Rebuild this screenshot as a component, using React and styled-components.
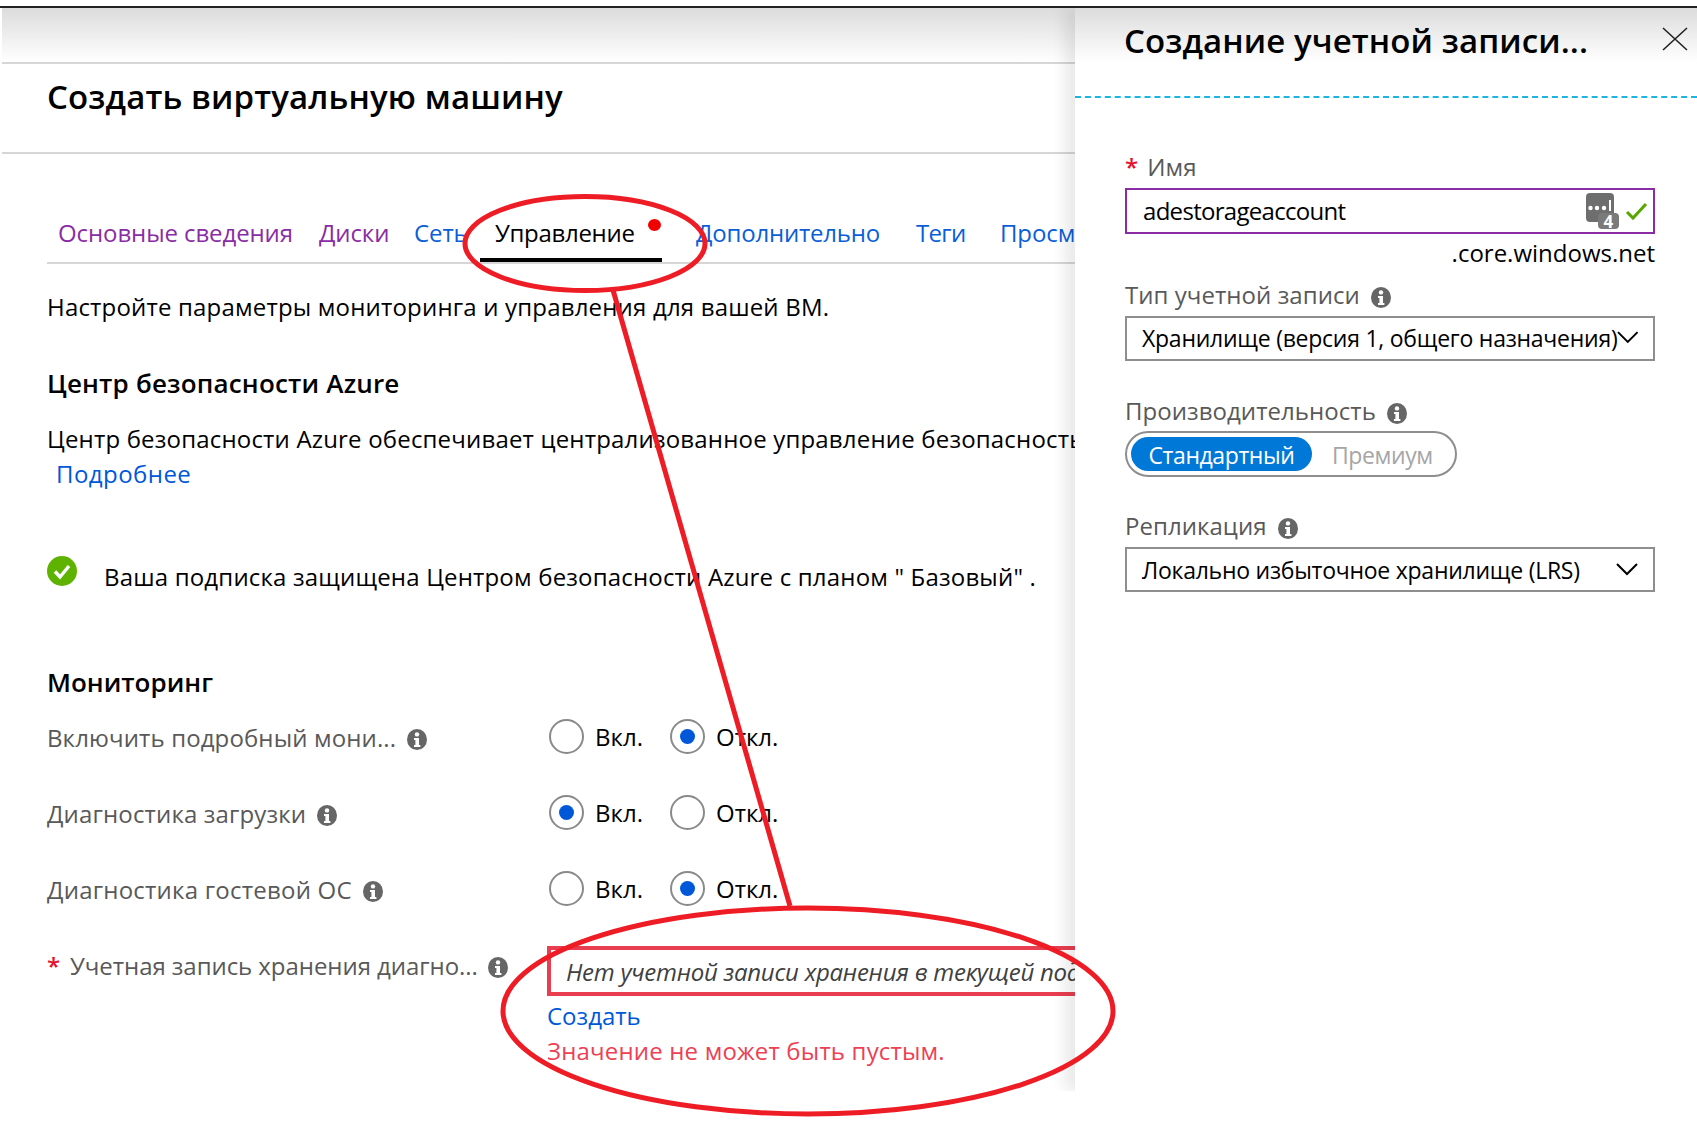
import styled, { createGlobalStyle } from "styled-components";

const GlobalStyle = createGlobalStyle`
  html, body { margin: 0; padding: 0; background: #fff; }
  body { font-family: "Open Sans", "Noto Sans", sans-serif; color: #000; }
`;

const Page = styled.div`
  position: relative;
  width: 1697px;
  height: 1145px;
  padding-top: 6px;
  box-sizing: border-box;
  overflow: hidden;
`;

const Shell = styled.div`
  display: flex;
  height: 1083px;
  border-top: 2px solid #222;
  overflow: hidden;
`;

const Main = styled.main`
  width: 1073px;
  margin-left: 2px;
  flex: none;
  overflow: hidden;
`;

const TopBand = styled.div`
  height: 54px;
  background: linear-gradient(#dcdcdc, #fff);
  border-bottom: 2px solid #d6d6d6;
`;

const Header = styled.header`
  height: 90px;
  padding: 12px 0 0 45px;
  box-sizing: border-box;
  border-bottom: 2px solid #d6d6d6;
`;

const Title = styled.h1`
  margin: 0;
  font-size: 33px;
  font-weight: 600;
  letter-spacing: 0.12px;
  line-height: 42px;
  white-space: nowrap;
`;

const Body = styled.div`
  padding-left: 45px;
`;

const Tabs = styled.nav`
  display: flex;
  padding-top: 63px;
  border-bottom: 2px solid #d6d6d6;
  white-space: nowrap;
`;

const Tab = styled.a`
  position: relative;
  flex: none;
  width: ${(p) => p.$w}px;
  height: 45px;
  padding-left: ${(p) => p.$pl}px;
  box-sizing: border-box;
  font-size: 24px;
  letter-spacing: ${(p) => p.$ls}px;
  line-height: 32px;
  color: ${(p) => (p.$active ? "#000" : p.$visited ? "#8a2da5" : "#0a5fd8")};
  border-bottom: 4px solid ${(p) => (p.$active ? "#000" : "transparent")};
`;

const TabDot = styled.span`
  position: absolute;
  top: 2px;
  right: 1px;
  width: 13px;
  height: 12px;
  border-radius: 50%;
  background: #f00000;
`;

const Text = styled.p`
  margin: ${(p) => p.$mt}px 0 0;
  font-size: 24px;
  letter-spacing: 0.18px;
  line-height: ${(p) => p.$lh || 34}px;
  white-space: nowrap;
`;

const Link = styled.a`
  display: block;
  margin-top: ${(p) => p.$mt || 0}px;
  padding-left: ${(p) => p.$pl || 0}px;
  font-size: 24px;
  letter-spacing: ${(p) => p.$ls || 0}px;
  line-height: 34px;
  color: #0058d8;
`;

const Heading = styled.h2`
  margin: ${(p) => p.$mt}px 0 0;
  font-size: 26px;
  font-weight: 600;
  letter-spacing: ${(p) => p.$ls}px;
  line-height: 36px;
  white-space: nowrap;
`;

const StatusRow = styled.div`
  display: flex;
  gap: 27px;
  margin-top: 69px;
  font-size: 24px;
  letter-spacing: 0.18px;
  line-height: 34px;
  white-space: nowrap;
`;

const StatusIcon = styled.svg`
  flex: none;
  width: 30px;
  height: 30px;
  margin-top: -4px;
`;

const RowList = styled.div`
  margin-top: -1px;
`;

const Row = styled.div`
  display: grid;
  grid-template-columns: 502px 1fr;
  height: 76px;
`;

const RowLabel = styled.div`
  display: flex;
  align-items: center;
  gap: ${(p) => p.$gap || 11}px;
  height: 76px;
  font-size: 24px;
  letter-spacing: ${(p) => p.$ls}px;
  color: #595959;
  white-space: nowrap;
`;

const Star = styled.span`
  color: #e8112d;
  font-size: 24px;
  font-weight: 600;
`;

const Radios = styled.div`
  display: flex;
  align-items: center;
  height: 76px;
  margin-top: -1px;
`;

const Option = styled.label`
  display: flex;
  align-items: center;
  gap: 11px;
  width: 121px;
  font-size: 24px;
`;

const Radio = styled.span`
  display: flex;
  align-items: center;
  justify-content: center;
  width: 35px;
  height: 35px;
  box-sizing: border-box;
  border: 2px solid #8a8a8a;
  border-radius: 50%;

  &::after {
    content: "";
    display: ${(p) => (p.$on ? "block" : "none")};
    width: 15px;
    height: 15px;
    border-radius: 50%;
    background: #0058d8;
  }
`;

const FieldColumn = styled.div`
  margin-left: -2px;
  padding-top: 19px;
  white-space: nowrap;
`;

const ErrorInput = styled.div`
  height: 50px;
  margin-right: -40px;
  padding-left: 15px;
  box-sizing: border-box;
  border: 4px solid #e83e50;
  font-size: 24px;
  font-style: italic;
  letter-spacing: -0.25px;
  line-height: 43px;
  color: #404040;
  overflow: hidden;
`;

const ErrorText = styled.div`
  margin-top: 1px;
  font-size: 24px;
  letter-spacing: 0.17px;
  line-height: 34px;
  color: #ee3f54;
`;

const Panel = styled.aside`
  position: relative;
  flex: none;
  width: 622px;
  background: linear-gradient(#dcdcdc, #fff 54px);
  box-shadow: -10px 0 14px rgba(0, 0, 0, 0.09);
`;

const PanelHeader = styled.div`
  display: flex;
  justify-content: space-between;
  align-items: flex-start;
  height: 90px;
  padding: 11px 9px 0 49px;
  box-sizing: border-box;
  border-bottom: 2px dashed #1cb5e0;
`;

const PanelTitle = styled.h2`
  margin: 0;
  font-size: 33px;
  font-weight: 600;
  letter-spacing: 0.1px;
  line-height: 44px;
  white-space: nowrap;
`;

const CloseIcon = styled.svg`
  width: 26px;
  height: 24px;
  margin-top: 8px;
`;

const Form = styled.div`
  padding: 53px 42px 0 50px;
`;

const FieldLabel = styled.div`
  display: flex;
  align-items: center;
  gap: ${(p) => p.$gap || 11}px;
  margin-top: ${(p) => p.$mt || 0}px;
  font-size: 24px;
  letter-spacing: 0.05px;
  line-height: 32px;
  color: #595959;
  white-space: nowrap;
`;

const NameInput = styled.div`
  display: flex;
  align-items: center;
  height: 46px;
  margin-top: 5px;
  padding: 0 5px 0 16px;
  box-sizing: border-box;
  border: 2px solid #8a2da5;
  font-size: 24px;
  letter-spacing: -0.7px;
`;

const NameValue = styled.span`
  flex: 1;
  margin-top: -2px;
`;

const Suffix = styled.div`
  margin-top: 3px;
  font-size: 24px;
  line-height: 32px;
  text-align: right;
`;

const Select = styled.div`
  display: flex;
  align-items: center;
  justify-content: space-between;
  height: 45px;
  margin-top: ${(p) => p.$mt}px;
  padding: 0 ${(p) => p.$pr}px ${(p) => p.$pb}px 15px;
  box-sizing: border-box;
  border: 2px solid #8e8e8e;
  font-size: 23px;
  letter-spacing: -0.25px;
  white-space: nowrap;
`;

const Toggle = styled.div`
  display: flex;
  align-items: center;
  width: 332px;
  height: 46px;
  margin-top: 4px;
  padding: 0 4px;
  box-sizing: border-box;
  border: 2px solid #8e8e8e;
  border-radius: 23px;
  font-size: 23px;
  letter-spacing: -0.4px;
`;

const ToggleOn = styled.span`
  width: 181px;
  height: 34px;
  line-height: 36px;
  text-align: center;
  border-radius: 17px;
  background: #0078d7;
  color: #fff;
`;

const ToggleOff = styled.span`
  margin-left: 20px;
  margin-top: 2px;
  color: #a6a6a6;
`;

const Annotation = styled.svg`
  position: absolute;
  top: 0;
  left: 0;
  width: 1697px;
  height: 1145px;
  pointer-events: none;
`;

const InfoBadge = styled.svg`
  flex: none;
  width: 20px;
  height: 21px;
  margin-top: 4px;
`;

const KeyIcon = styled.svg`
  flex: none;
  width: 33px;
  height: 36px;
`;

const CheckIcon = styled.svg`
  flex: none;
  width: 23px;
  height: 19px;
  margin-left: 6px;
`;

const Info = () => (
  <InfoBadge viewBox="0 0 20 21">
    <ellipse cx="10" cy="10.5" rx="10" ry="10.5" fill="#666" />
    <circle cx="10" cy="5.4" r="2.2" fill="#fff" />
    <path d="M7 9h5v7h1.4v2H7v-2h1.4v-5H7z" fill="#fff" />
  </InfoBadge>
);

const Chevron = () => (
  <svg width="22" height="13" viewBox="0 0 22 13">
    <path d="M1 1l10 10L21 1" fill="none" stroke="#000" strokeWidth="2" />
  </svg>
);

const KeyBadge = () => (
  <KeyIcon viewBox="0 0 33 36">
    <rect x="0" y="0" width="28" height="29" rx="4" fill="#6e6e6e" />
    <circle cx="4.5" cy="15" r="2.2" fill="#fff" />
    <circle cx="11" cy="15" r="2.2" fill="#fff" />
    <circle cx="18" cy="15" r="2.2" fill="#fff" />
    <path d="M24 7v11" stroke="#fff" strokeWidth="2" />
    <rect x="12" y="20" width="21" height="16" rx="4" fill="#7a7a7a" />
    <text x="22" y="35" fontSize="17" fontWeight="700" textAnchor="middle" fill="#fff" fontFamily="Open Sans">
      4
    </text>
  </KeyIcon>
);

const GreenCheck = () => (
  <CheckIcon viewBox="0 0 23 19">
    <path d="M2 10l6 6L21 2" fill="none" stroke="#58a700" strokeWidth="3" />
  </CheckIcon>
);

const tabs = [
  { label: "Основные сведения", w: 261, pl: 11, ls: -0.1, visited: true },
  { label: "Диски", w: 96, pl: 11, ls: -0.1, visited: true },
  { label: "Сеть", w: 76, pl: 10, ls: -0.1 },
  { label: "Управление", w: 182, pl: 15, ls: -0.3, active: true },
  { label: "Дополнительно", w: 254, pl: 34, ls: -0.2 },
  { label: "Теги", w: 84, pl: 0, ls: -0.7 },
  { label: "Просмотр и создание", w: 300, pl: 0, ls: -0.1 },
];

const RadioPair = ({ on }) => (
  <Radios>
    <Option>
      <Radio $on={on} />
      Вкл.
    </Option>
    <Option>
      <Radio $on={!on} />
      Откл.
    </Option>
  </Radios>
);

export default function App() {
  return (
    <Page>
      <GlobalStyle />
      <Shell>
        <Main>
          <TopBand />
          <Header>
            <Title>Создать виртуальную машину</Title>
          </Header>
          <Body>
            <Tabs>
              {tabs.map((t) => (
                <Tab key={t.label} $w={t.w} $pl={t.pl} $ls={t.ls} $active={t.active} $visited={t.visited}>
                  {t.label}
                  {t.active && <TabDot />}
                </Tab>
              ))}
            </Tabs>
            <Text $mt={27} $lh={32}>
              Настройте параметры мониторинга и управления для вашей ВМ.
            </Text>
            <Heading $mt={42} $ls={0.18}>
              Центр безопасности Azure
            </Heading>
            <Text $mt={20} $lh={36}>
              Центр безопасности Azure обеспечивает централизованное управление безопасностью ваших рабочих нагрузок.
            </Text>
            <Link $pl={9} $ls={0.45}>
              Подробнее
            </Link>
            <StatusRow>
              <StatusIcon viewBox="0 0 30 30">
                <circle cx="15" cy="15" r="15" fill="#5db300" />
                <path d="M8 15.5l5 5.5 9-11" fill="none" stroke="#fff" strokeWidth="3.4" />
              </StatusIcon>
              Ваша подписка защищена Центром безопасности Azure с планом " Базовый" .
            </StatusRow>
            <Heading $mt={70} $ls={0}>
              Мониторинг
            </Heading>
            <RowList>
              <Row>
                <RowLabel $ls={0.12}>
                  Включить подробный мони... <Info />
                </RowLabel>
                <RadioPair on={false} />
              </Row>
              <Row>
                <RowLabel $ls={0.15}>
                  Диагностика загрузки <Info />
                </RowLabel>
                <RadioPair on={true} />
              </Row>
              <Row>
                <RowLabel $ls={0.23}>
                  Диагностика гостевой ОС <Info />
                </RowLabel>
                <RadioPair on={false} />
              </Row>
              <Row>
                <RowLabel $ls={-0.06} $gap={10}>
                  <Star>*</Star>
                  Учетная запись хранения диагно... <Info />
                </RowLabel>
                <FieldColumn>
                  <ErrorInput>Нет учетной записи хранения в текущей подписке</ErrorInput>
                  <Link $mt={3}>Создать</Link>
                  <ErrorText>Значение не может быть пустым.</ErrorText>
                </FieldColumn>
              </Row>
            </RowList>
          </Body>
        </Main>
        <Panel>
          <PanelHeader>
            <PanelTitle>Создание учетной записи...</PanelTitle>
            <CloseIcon viewBox="0 0 26 24">
              <path d="M1 1l24 22M25 1L1 23" fill="none" stroke="#222" strokeWidth="1.6" />
            </CloseIcon>
          </PanelHeader>
          <Form>
            <FieldLabel $gap={9}>
              <Star>*</Star>
              Имя
            </FieldLabel>
            <NameInput>
              <NameValue>adestorageaccount</NameValue>
              <KeyBadge />
              <GreenCheck />
            </NameInput>
            <Suffix>.core.windows.net</Suffix>
            <FieldLabel $mt={10}>
              Тип учетной записи <Info />
            </FieldLabel>
            <Select $pr={14} $pb={2} $mt={5}>
              Хранилище (версия 1, общего назначения)
              <Chevron />
            </Select>
            <FieldLabel $mt={34}>
              Производительность <Info />
            </FieldLabel>
            <Toggle>
              <ToggleOn>Стандартный</ToggleOn>
              <ToggleOff>Премиум</ToggleOff>
            </Toggle>
            <FieldLabel $mt={33}>
              Репликация <Info />
            </FieldLabel>
            <Select $pr={15} $pb={0} $mt={5}>
              Локально избыточное хранилище (LRS)
              <Chevron />
            </Select>
          </Form>
        </Panel>
      </Shell>
      <Annotation viewBox="0 0 1697 1145">
        <ellipse cx="585" cy="243.5" rx="120" ry="47" fill="none" stroke="#ee1c25" strokeWidth="5" />
        <path d="M613 290L790 906" fill="none" stroke="#ee1c25" strokeWidth="5" />
        <ellipse cx="808" cy="1011" rx="305" ry="103" fill="none" stroke="#ee1c25" strokeWidth="5" />
      </Annotation>
    </Page>
  );
}
